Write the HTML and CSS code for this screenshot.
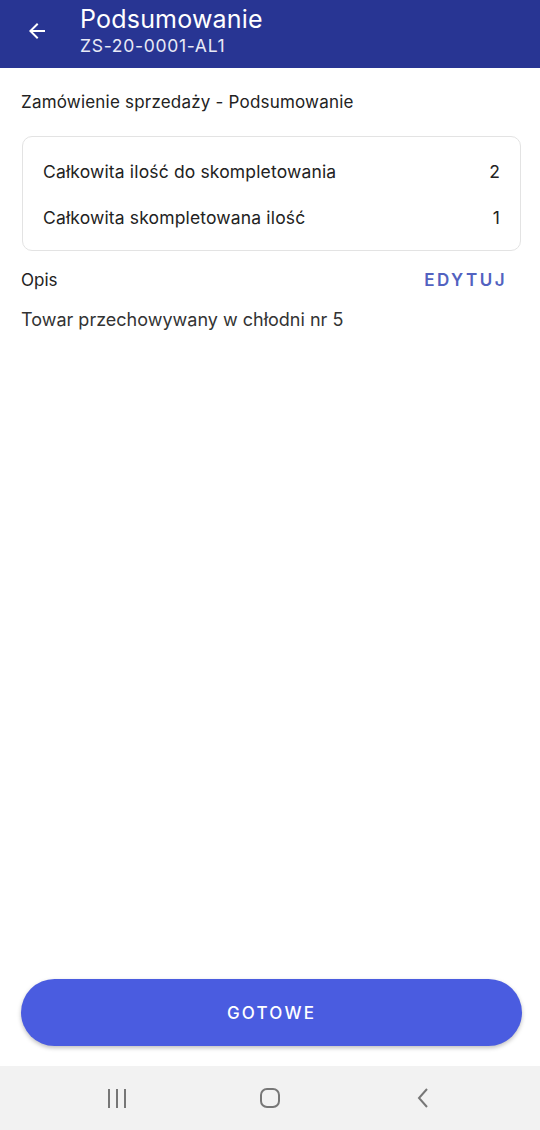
FILE: index.html
```html
<!DOCTYPE html>
<html lang="pl">
<head>
<meta charset="utf-8">
<link rel="stylesheet" href="styles.css">
</head>
<body>
<div class="screen">
  <header class="appbar">
    <button class="back" aria-label="Wstecz">
      <svg width="24" height="24" viewBox="0 0 24 24"><path d="M20 11H7.83l5.59-5.59L12 4l-8 8 8 8 1.41-1.41L7.83 13H20v-2z" fill="#fff"/></svg>
    </button>
    <div class="titles">
      <div class="title">Podsumowanie</div>
      <div class="subtitle">ZS-20-0001-AL1</div>
    </div>
  </header>
  <main class="content">
    <div class="section-title">Zamówienie sprzedaży - Podsumowanie</div>
    <div class="card">
      <div class="row"><span>Całkowita ilość do skompletowania</span><span>2</span></div>
      <div class="row"><span>Całkowita skompletowana ilość</span><span>1</span></div>
    </div>
    <div class="desc-head">
      <span class="desc-label">Opis</span>
      <span class="edit">EDYTUJ</span>
    </div>
    <div class="desc-text">Towar przechowywany w chłodni nr 5</div>
  </main>
  <div class="actions">
    <button class="done">GOTOWE</button>
  </div>
  <nav class="sysnav">
    <svg width="22" height="22" viewBox="0 0 22 22"><path d="M3 2v19M11 2v19M19 2v19" stroke="#777" stroke-width="2" fill="none"/></svg>
    <svg width="22" height="22" viewBox="0 0 22 22"><rect x="2" y="2" width="18" height="18" rx="6" stroke="#777" stroke-width="2" fill="none"/></svg>
    <svg width="22" height="22" viewBox="0 0 22 22"><path d="M15 2L7 11l8 9" stroke="#777" stroke-width="2" fill="none"/></svg>
  </nav>
</div>
</body>
</html>
```
FILE: styles.css
```css
* { box-sizing: border-box; }
html, body { margin: 0; padding: 0; }
body { font-family: Inter, "Noto Sans", sans-serif; color: #222; background: #fff; }
.screen { width: 540px; height: 1130px; display: flex; flex-direction: column; }
.appbar { height: 68px; background: #283593; display: flex; align-items: flex-start; color: #fff; flex-shrink: 0; }
.back { background: none; border: 0; padding: 0; margin: 19px 0 0 25px; width: 24px; height: 24px; }
.titles { margin-left: 31px; padding-top: 4px; }
.title { font-size: 25px; line-height: 31px; font-weight: 400; letter-spacing: 0.2px; }
.subtitle { font-size: 17.5px; line-height: 22px; letter-spacing: 0.7px; color: #e8eaf6; }
.content { flex: 1; padding: 0 19px 0 21px; }
.section-title { font-size: 17px; margin-top: 22px; line-height: 24px; letter-spacing: 0.2px; }
.card { margin-top: 22px; border: 1px solid #e3e3e3; border-radius: 10px; padding: 11px 20px 10px 20px; margin-left: 1px; }
.row { display: flex; justify-content: space-between; font-size: 17.5px; line-height: 23px; padding: 11.5px 0; letter-spacing: 0.15px; }
.desc-head { display: flex; justify-content: space-between; margin-top: 17px; font-size: 17px; line-height: 24px; }
.edit { color: #5262c0; font-weight: 600; letter-spacing: 2.5px; margin-right: 14px; }
.desc-text { font-size: 18px; line-height: 24px; margin-top: 16px; color: #333; }
.actions { padding: 0 18px 20px 21px; }
.done { width: 501px; height: 67px; border: 0; border-radius: 34px; background: #4a5ce0; color: #fff; font-family: inherit; font-size: 17px; font-weight: 500; letter-spacing: 2.2px; box-shadow: 0 2px 4px rgba(0,0,0,0.25); }
.sysnav { height: 64px; background: #f2f2f2; display: flex; justify-content: center; gap: 131px; align-items: center; flex-shrink: 0; }
```
